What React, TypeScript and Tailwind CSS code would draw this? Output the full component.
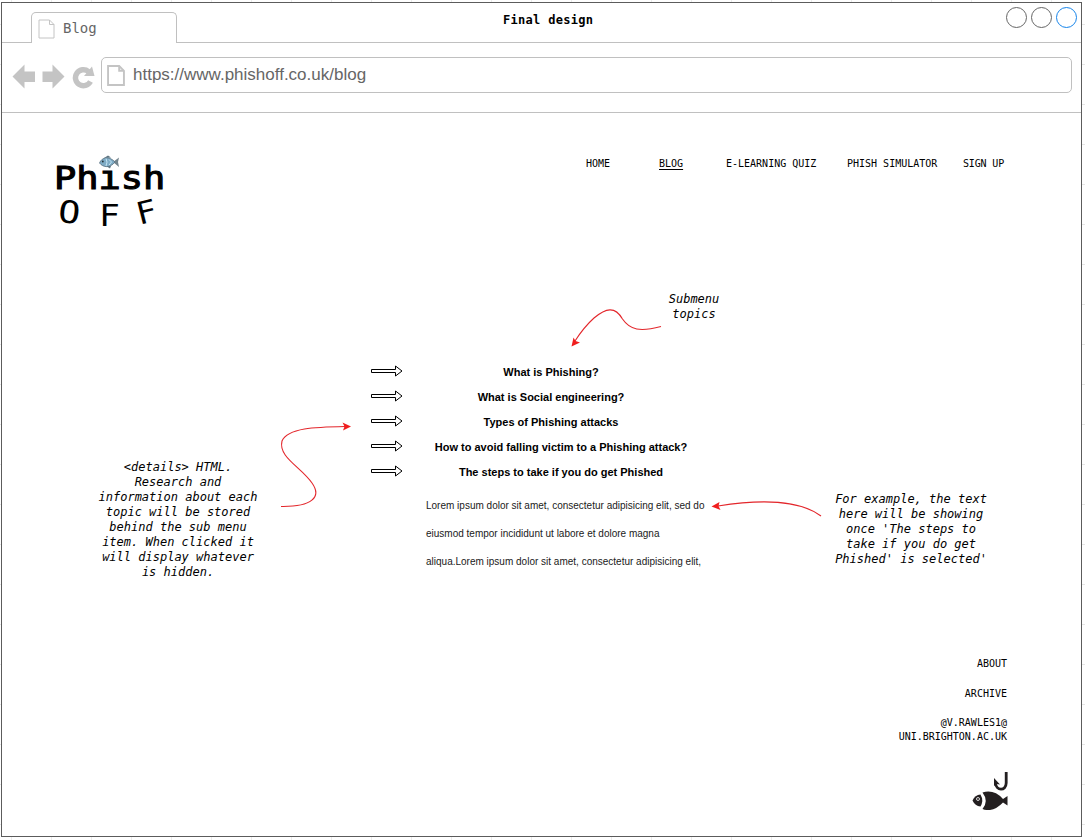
const MONO = "font-['DejaVu_Sans_Mono','Liberation_Mono',monospace]";
const SANS = "font-['Liberation_Sans',Arial,sans-serif]";

function PageIcon({ className, stroke }: { className: string; stroke: number }) {
  return (
    <svg viewBox="0 0 17 20" className={className} fill="none" stroke="#c4c4c4" strokeWidth={stroke} preserveAspectRatio="none">
      <path d="M1 1H11.5L16 5.5V19H1Z" />
      <path d="M11.5 1V5.5H16" />
    </svg>
  );
}

function TitleBar() {
  return (
    <div className="flex h-10 border-b border-[#c0c0c0]">
      <div className="ml-[29px] mt-[9px] flex h-[31px] w-[146px] items-center rounded-t-[5px] border border-b-0 border-[#c0c0c0] bg-white pl-1.5">
        <PageIcon className="mt-px h-5 w-[17px]" stroke={1} />
        <span className={`${MONO} ml-2 text-[14px] leading-5 text-[#666]`}>Blog</span>
      </div>
      <h1 className={`${MONO} ml-[326px] mt-[9px] text-[12px] font-bold leading-4 tracking-[0.3px] text-black`}>Final design</h1>
      <div className="ml-auto mr-[4px] mt-1 flex gap-1">
        <span className="size-[21px] rounded-full border border-[#666]" />
        <span className="size-[21px] rounded-full border border-[#666]" />
        <span className="size-[21px] rounded-full border border-[#1684ea]" />
      </div>
    </div>
  );
}

function Toolbar() {
  return (
    <div className="flex h-[70px] border-b border-[#c0c0c0] pl-[10px] pt-[14px]">
      <svg viewBox="12 57 87 38" className="h-[38px] w-[87px] shrink-0" fill="#c4c4c4">
        <path d="M12.5 76.5L24.5 64.5V71.5H35V82H24.5V88.5Z" />
        <path d="M64.500 76.5L52.500 64.5V71.5H42.500V82H52.500V88.5Z" />
        <path d="M90.500 81.500A8 8 0 1 1 88.500 71.500" fill="none" stroke="#c4c4c4" strokeWidth="5.4" />
        <path d="M92 66.500L94.500 76H84Z" />
      </svg>
      <div className="ml-0.5 flex h-9 w-[971px] items-center rounded-[5px] border border-[#c0c0c0] bg-white pl-[5px]">
        <PageIcon className="h-[21px] w-[18px]" stroke={1.8} />
        <span className={`${SANS} ml-2 text-[17px] leading-5 text-[#666]`}>https://www.phishoff.co.uk/blog</span>
      </div>
    </div>
  );
}

function Logo() {
  return (
    <div className={`${MONO} relative ml-[52px] mt-[46px] h-[80px] w-[114px] text-black`}>
      <div className="w-[97px] origin-left scale-x-[1.155] text-[32px] leading-[38px] [-webkit-text-stroke:1.1px_black]">Phısh</div>
      <div className="mt-px flex text-[31px] leading-[30px]">
        <span className="ml-[6px] -translate-y-px rotate-6 scale-x-[1.18]">O</span>
        <span className="ml-[21px] translate-y-0.5 scale-x-[1.12]">F</span>
        <span className="ml-[19px] -translate-y-px -rotate-[14deg] scale-x-[1.08]">F</span>
      </div>
      <svg viewBox="0 0 21 14" className="absolute left-[45px] -top-1 h-[14px] w-[21px]">
        <path d="M5 3L9 0.500L12 2.500ZM7 11L11 13.500L12 11Z" fill="#5e7480" />
        <path d="M14 7L20 2.500L19 7L20 12Z" fill="#73848d" />
        <path d="M0.500 8C3 2 10 0.500 16 7C11 13.500 4 12.500 0.500 8Z" fill="#7eabc5" stroke="#58707f" strokeWidth="0.8" />
        <path d="M7 3.500Q9 7 7 11M10 4.500L12.500 7L10 10" fill="none" stroke="#c5e5f4" strokeWidth="1" />
        <circle cx="3.800" cy="6.500" r="0.900" fill="#263238" />
      </svg>
    </div>
  );
}

function Nav() {
  return (
    <nav className={`${MONO} ml-[418px] mt-[43px] flex text-[10px] leading-[15px] text-black`}>
      <a className="w-[73px]">HOME</a>
      <a className="w-[67px] underline underline-offset-2">BLOG</a>
      <a className="w-[121px]">E-LEARNING QUIZ</a>
      <a className="w-[116px]">PHISH SIMULATOR</a>
      <a className="tracking-[-0.15px]">SIGN UP</a>
    </nav>
  );
}

const topics = [
  { label: "What is Phishing?", place: "w-[298px]" },
  { label: "What is Social engineering?", place: "w-[298px]" },
  { label: "Types of Phishing attacks", place: "w-[298px]" },
  { label: "How to avoid falling victim to a Phishing attack?", place: "w-[318px]" },
  { label: "The steps to take if you do get Phished", place: "w-[318px]" },
];

function Topics() {
  return (
    <div className={`${SANS} ml-[110px] mt-[73px] w-[351px] text-black`}>
      <ul>
        {topics.map((t) => (
          <li key={t.label} className="flex h-[25px] items-center">
            <svg viewBox="0 0 33 12" className="mb-px h-3 w-[33px] shrink-0" fill="white" stroke="black" strokeWidth="1">
              <path d="M1.500 4.500H25.500V1L32 6L25.500 11V7.500H1.500Z" />
            </svg>
            <span className={`${t.place} -ml-px mt-0.5 shrink-0 whitespace-nowrap text-center text-[11px] font-bold leading-[13px]`}>{t.label}</span>
          </li>
        ))}
      </ul>
      <p className="ml-14 mt-[8px] whitespace-nowrap text-[10px] leading-7 text-[#1a1a1a]">
        Lorem ipsum dolor sit amet, consectetur adipisicing elit, sed do
        <br />
        eiusmod tempor incididunt ut labore et dolore magna
        <br />
        aliqua.Lorem ipsum dolor sit amet, consectetur adipisicing elit,
      </p>
    </div>
  );
}

function Note({ lines, className }: { lines: string[]; className: string }) {
  return (
    <div className={`${MONO} ${className} whitespace-nowrap text-center text-[12px] italic leading-[15px] text-black`}>
      {lines.map((l) => (
        <div key={l}>{l}</div>
      ))}
    </div>
  );
}

function Connectors() {
  return (
    <svg viewBox="2 113 1079 723" className="pointer-events-none absolute inset-0 h-[723px] w-[1079px]">
      <g fill="none" stroke="#e3262b" strokeWidth="1.1">
        <path d="M661 326.500C640 332 630 330 622.500 319C615 306 606 308 594 318Q584 327 575 341" />
        <path d="M281 506.500C312 507 322 497 312 483C301 467 278 457 282 441C288 428 315 427 345 426.500" />
        <path d="M821 516C801 501 768 498 718 506" />
      </g>
      <g fill="#f01e1e">
        <path d="M571.500 346.500L573.500 337.500L575.500 341L580 342.500Z" />
        <path d="M351 426.500L342.500 422.500L344.500 426.500L343 430.500Z" />
        <path d="M711.500 506.500L719.500 502L718.500 506L720.500 510Z" />
      </g>
    </svg>
  );
}

function Footer() {
  return (
    <footer className={`${MONO} flex flex-col items-end pr-[74px] text-right text-[10px] leading-[14px] text-black`}>
      <a>ABOUT</a>
      <a className="mt-4">ARCHIVE</a>
      <a className="mt-[15px]">
        @V.RAWLES1@
        <br />
        UNI.BRIGHTON.AC.UK
      </a>
      <svg viewBox="0 0 36 38" className="-mr-px mt-7 h-[38px] w-9">
        <path d="M34.200 0V11C34 19.500 24 19 23.500 11" fill="none" stroke="#231f20" strokeWidth="2.800" />
        <path d="M22 14V6L28 12.500L24.500 12Z" fill="#231f20" />
        <path d="M0.500 28.500Q3 23 8.500 22.500Q12 28.500 8.500 34.500Q3 34 0.500 28.500Z" fill="#231f20" />
        <circle cx="6" cy="27" r="1.500" fill="#231f20" stroke="white" strokeWidth="0.800" />
        <path d="M10.500 20.500Q22 17 31 27L35.500 24V33.500L31 30.500Q21 41 10.500 37Q17 29 10.500 20.500Z" fill="#231f20" />
      </svg>
    </footer>
  );
}

export default function App() {
  return (
    <div className="h-[840px] w-[1085px] overflow-hidden bg-white bg-[linear-gradient(to_right,#ececec_1px,transparent_1px),linear-gradient(to_bottom,#e6e6e6_1px,transparent_1px)] bg-[length:40px_40px] bg-[position:11px_24px] pl-px pt-0.5">
      <div className="h-[835px] w-[1081px] border border-[#5c5c5c] bg-white">
        <TitleBar />
        <Toolbar />
        <main className="relative h-[723px] w-[1079px]">
          <div className="flex h-[173px]">
            <Logo />
            <Nav />
          </div>
          <div className="flex h-[371px]">
            <Note
              className="ml-[94px] mt-[174px] w-[164px]"
              lines={["<details> HTML.", "Research and", "information about each", "topic will be stored", "behind the sub menu", "item. When clicked it", "will display whatever", "is hidden."]}
            />
            <Topics />
            <div className="-ml-[55px] flex">
              <Note className="mt-[6px] h-[30px] w-[56px]" lines={["Submenu", "topics"]} />
              <Note
                className="ml-[107px] mt-[206px] w-[164px]"
                lines={["For example, the text", "here will be showing", "once 'The steps to", "take if you do get", "Phished' is selected'"]}
              />
            </div>
          </div>
          <Footer />
          <Connectors />
        </main>
      </div>
    </div>
  );
}
